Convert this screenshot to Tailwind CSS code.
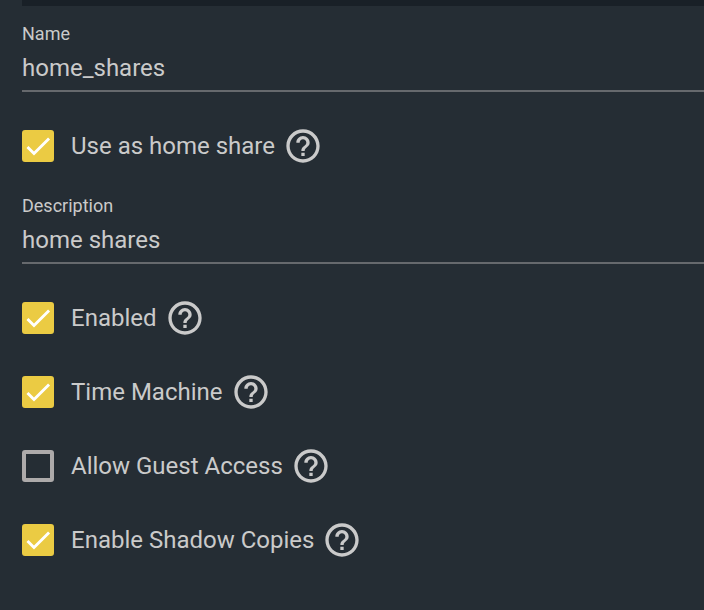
<!DOCTYPE html>
<html lang="en">
<head>
    <meta charset="UTF-8">
    <meta name="viewport" content="width=device-width, initial-scale=1.0">
    <title>Edit Share</title>
    <script src="https://cdn.jsdelivr.net/npm/@tailwindcss/browser@4"></script>
</head>
<body class="bg-[#252d34] min-h-screen pl-[22px] text-[#cacaca] font-[Roboto,sans-serif]">

    <!-- help icon, shared by all the options -->
    <svg class="hidden">
        <symbol id="help" viewBox="0 0 24 24">
            <path fill="currentColor" d="M11 18h2v-2h-2v2zm1-16C6.48 2 2 6.48 2 12s4.48 10 10 10 10-4.48 10-10S17.52 2 12 2zm0 18c-4.41 0-8-3.59-8-8s3.59-8 8-8 8 3.59 8 8-3.59 8-8 8zm0-14c-2.21 0-4 1.79-4 4h2c0-1.1.9-2 2-2s2 .9 2 2c0 2-3 1.75-3 5h2c0-2.25 3-2.5 3-5 0-2.21-1.79-4-4-4z"/>
        </symbol>
        <symbol id="check" viewBox="0 0 24 24">
            <path fill="none" stroke="white" stroke-width="2.133" d="M4.1 12.7 9 17.6 20.3 6.3"/>
        </symbol>
    </svg>

    <div class="h-1.5 bg-[#192027]"></div>

    <form class="pt-4 pb-12">
        <div>
            <label for="name" class="block text-lg leading-6">Name</label>
            <input type="text" id="name" value="home_shares" class="block w-full h-[46px] border-b-2 border-[#66696d] text-2xl outline-none">
        </div>

        <div class="flex items-center h-10 mt-[34px]">
            <span class="grid size-8 mr-[17px]">
                <input type="checkbox" id="home" checked class="peer col-start-1 row-start-1 appearance-none size-8 rounded-[3px] border-4 border-[#adaaaa] checked:border-[#ebcb43] checked:bg-[#ebcb43]">
                <svg class="col-start-1 row-start-1 size-8 pointer-events-none invisible peer-checked:visible"><use href="#check"/></svg>
            </span>
            <label for="home" class="text-2xl">Use as home share</label>
            <button type="button" aria-label="Help" class="ml-2"><svg class="size-10"><use href="#help"/></svg></button>
        </div>

        <div class="mt-7">
            <label for="description" class="block text-lg leading-6">Description</label>
            <input type="text" id="description" value="home shares" class="block w-full h-[46px] border-b-2 border-[#66696d] text-2xl outline-none">
        </div>

        <div class="flex flex-col gap-[34px] mt-[34px]">
            <div class="flex items-center h-10">
                <span class="grid size-8 mr-[17px]">
                    <input type="checkbox" id="enabled" checked class="peer col-start-1 row-start-1 appearance-none size-8 rounded-[3px] border-4 border-[#adaaaa] checked:border-[#ebcb43] checked:bg-[#ebcb43]">
                    <svg class="col-start-1 row-start-1 size-8 pointer-events-none invisible peer-checked:visible"><use href="#check"/></svg>
                </span>
                <label for="enabled" class="text-2xl">Enabled</label>
                <button type="button" aria-label="Help" class="ml-2"><svg class="size-10"><use href="#help"/></svg></button>
            </div>

            <div class="flex items-center h-10">
                <span class="grid size-8 mr-[17px]">
                    <input type="checkbox" id="timemachine" checked class="peer col-start-1 row-start-1 appearance-none size-8 rounded-[3px] border-4 border-[#adaaaa] checked:border-[#ebcb43] checked:bg-[#ebcb43]">
                    <svg class="col-start-1 row-start-1 size-8 pointer-events-none invisible peer-checked:visible"><use href="#check"/></svg>
                </span>
                <label for="timemachine" class="text-2xl">Time Machine</label>
                <button type="button" aria-label="Help" class="ml-2"><svg class="size-10"><use href="#help"/></svg></button>
            </div>

            <div class="flex items-center h-10">
                <span class="grid size-8 mr-[17px]">
                    <input type="checkbox" id="guest" class="peer col-start-1 row-start-1 appearance-none size-8 rounded-[3px] border-4 border-[#adaaaa] checked:border-[#ebcb43] checked:bg-[#ebcb43]">
                    <svg class="col-start-1 row-start-1 size-8 pointer-events-none invisible peer-checked:visible"><use href="#check"/></svg>
                </span>
                <label for="guest" class="text-2xl">Allow Guest Access</label>
                <button type="button" aria-label="Help" class="ml-2"><svg class="size-10"><use href="#help"/></svg></button>
            </div>

            <div class="flex items-center h-10">
                <span class="grid size-8 mr-[17px]">
                    <input type="checkbox" id="shadow" checked class="peer col-start-1 row-start-1 appearance-none size-8 rounded-[3px] border-4 border-[#adaaaa] checked:border-[#ebcb43] checked:bg-[#ebcb43]">
                    <svg class="col-start-1 row-start-1 size-8 pointer-events-none invisible peer-checked:visible"><use href="#check"/></svg>
                </span>
                <label for="shadow" class="text-2xl">Enable Shadow Copies</label>
                <button type="button" aria-label="Help" class="ml-2"><svg class="size-10"><use href="#help"/></svg></button>
            </div>
        </div>
    </form>

</body>
</html>
